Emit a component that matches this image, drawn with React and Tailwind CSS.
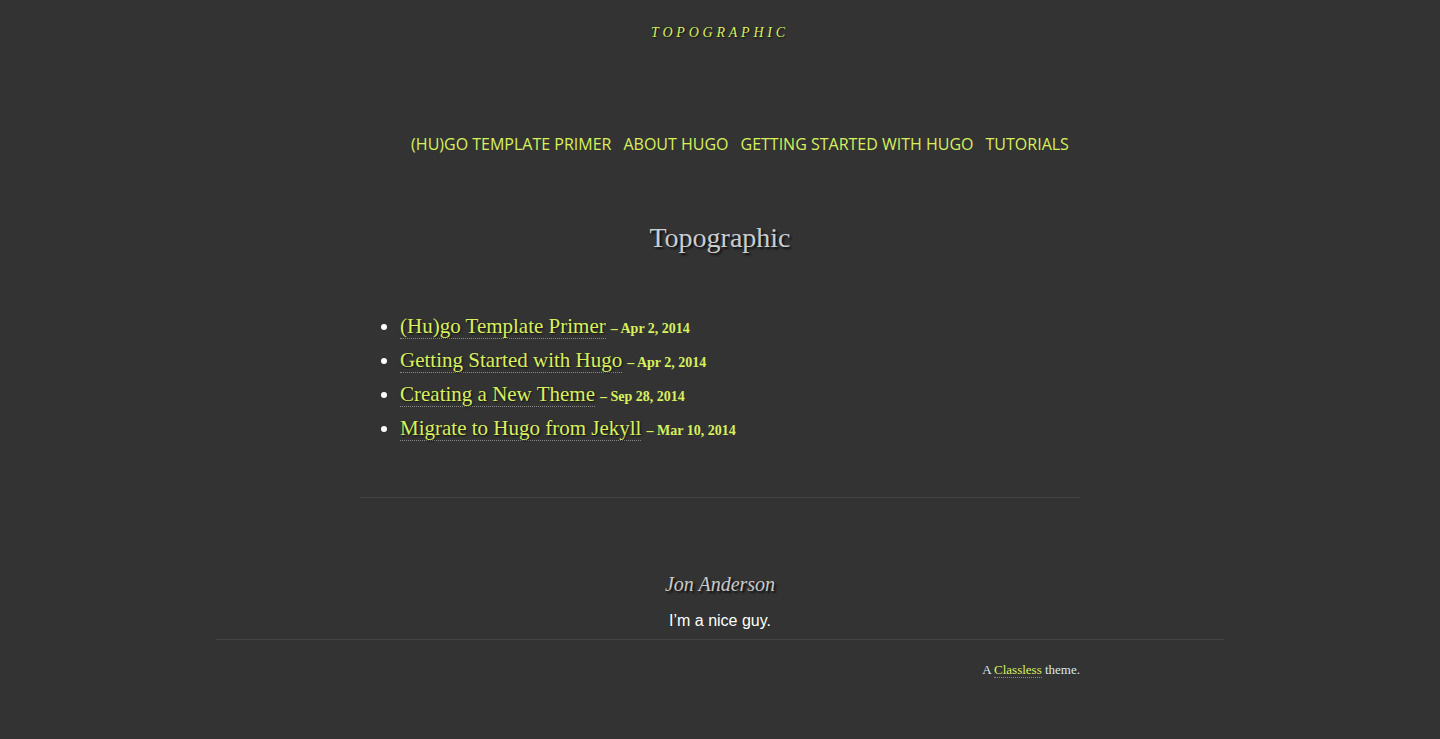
const posts = [
  { title: '(Hu)go Template Primer', date: 'Apr 2, 2014' },
  { title: 'Getting Started with Hugo', date: 'Apr 2, 2014' },
  { title: 'Creating a New Theme', date: 'Sep 28, 2014' },
  { title: 'Migrate to Hugo from Jekyll', date: 'Mar 10, 2014' },
];

const nav = ['(Hu)go Template Primer', 'About Hugo', 'Getting Started with Hugo', 'Tutorials'];

const serif = "font-['Liberation_Serif','DejaVu_Serif',serif]";

export default function App() {
  return (
    <div className={`min-h-[739px] bg-[#333333] text-[#e6e6e6] ${serif}`}>
      <header className="pt-[20px] text-center">
        <a className="text-[14px] italic tracking-[0.27em] text-[#d8f05c] [text-shadow:1px_1px_2px_#111]">
          TOPOGRAPHIC
        </a>
        <nav className="mt-[88px]">
          <ul className="flex justify-center gap-3 pl-10 font-['Open_Sans',sans-serif] text-[16px] uppercase text-[#d8f05c]">
            {nav.map((n) => (
              <li key={n}>
                <a>{n}</a>
              </li>
            ))}
          </ul>
        </nav>
      </header>

      <main className="mx-auto w-[720px]">
        <h1 className="mt-[61px] text-center text-[28px] text-[#c9cdd0] [text-shadow:2px_2px_2px_#111]">
          Topographic
        </h1>
        <ul className="mt-[52px] list-disc pl-10 marker:text-white">
          {posts.map((p) => (
            <li key={p.title} className="h-[34px] text-[21px]">
              <a className="border-b border-dotted border-[#888] text-[#d8f05c] [text-shadow:1px_1px_2px_#111]">
                {p.title}
              </a>
              <span className="ml-[5px] text-[14px] font-bold text-[#d8f05c]">– {p.date}</span>
            </li>
          ))}
        </ul>
        <hr className="mt-[50px] border-t border-[#444]" />
      </main>

      <footer>
        <div className="mt-[71px] text-center">
          <div className="text-[20px] italic text-[#c9c9c9] [text-shadow:2px_2px_2px_#111]">Jon Anderson</div>
          <p className="mt-[10px] font-['Liberation_Sans',Arial,sans-serif] text-[16px] text-white">I’m a nice guy.</p>
        </div>
        <hr className="mx-auto mt-[6px] w-[1008px] border-t border-[#444]" />
        <div className="mx-auto mt-[20px] w-[720px] text-right text-[13px] text-[#d8e8ee]">
          A{' '}
          <a className="border-b border-dotted border-[#888] text-[#d8f05c]">Classless</a> theme.
        </div>
      </footer>
    </div>
  );
}
